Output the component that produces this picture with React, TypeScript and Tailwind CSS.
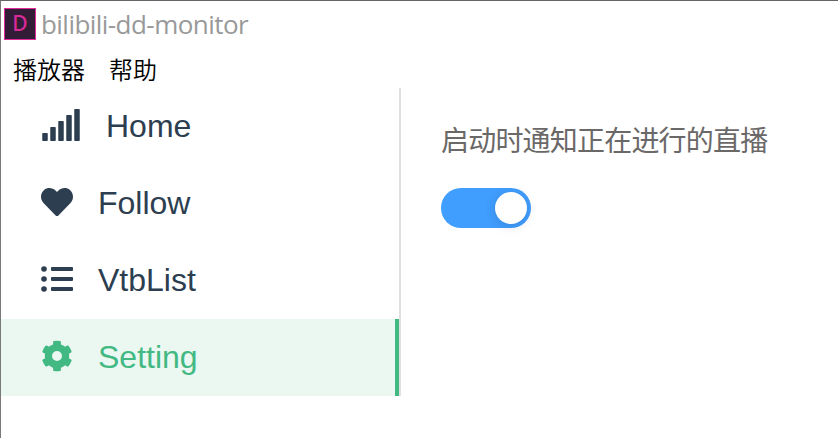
import type { ReactNode } from "react";
import { FaHeart } from "react-icons/fa";

function SignalIcon() {
  return (
    <svg width="40" height="32" viewBox="0 0 40 32" fill="currentColor">
      <rect x="1.25" y="24" width="5.5" height="8" rx="0.8" />
      <rect x="9.25" y="18" width="5.5" height="14" rx="0.8" />
      <rect x="17.25" y="12" width="5.5" height="20" rx="0.8" />
      <rect x="25.25" y="6" width="5.5" height="26" rx="0.8" />
      <rect x="33.25" y="0" width="5.5" height="32" rx="0.8" />
    </svg>
  );
}

function ListIcon() {
  return (
    <svg width="32" height="32" viewBox="0 0 32 32" fill="currentColor">
      <circle cx="3" cy="6" r="2.8" />
      <circle cx="3" cy="16" r="2.8" />
      <circle cx="3" cy="26" r="2.8" />
      <rect x="10" y="4" width="22" height="4" rx="1" />
      <rect x="10" y="14" width="22" height="4" rx="1" />
      <rect x="10" y="24" width="22" height="4" rx="1" />
    </svg>
  );
}

const TEETH = [0, 60, 120, 180, 240, 300];

function GearIcon() {
  return (
    <svg width="32" height="32" viewBox="0 0 32 32" fill="currentColor">
      <circle cx="16" cy="16" r="8.6" fill="none" stroke="currentColor" strokeWidth="7.2" />
      {TEETH.map((angle) => (
        <path
          key={angle}
          transform={`rotate(${angle} 16 16)`}
          d="M12.1 6V2q0-.8.8-1a16 16 0 0 1 6.2 0q.8.2.8 1v4z"
        />
      ))}
    </svg>
  );
}

function NavItem({ icon, label, active = false }: { icon: ReactNode; label: string; active?: boolean }) {
  return (
    <a
      className={
        "flex h-[77px] items-center gap-[25px] pl-10 text-[32px] leading-[77px] " +
        (active ? "border-r-4 border-[#42b983] bg-[#ebf7f1] text-[#42b983]" : "text-[#2c3e50]")
      }
    >
      <span className="shrink-0 pb-[3px]">{icon}</span>
      <span>{label}</span>
    </a>
  );
}

export default function App() {
  return (
    <div className="flex h-[438px] w-[838px] flex-col overflow-hidden border-t border-l border-t-[#686464] border-l-[#7b7977] bg-white font-['Liberation_Sans','Noto_Sans_CJK_SC',sans-serif]">
      <header className="flex h-[46px] shrink-0 items-center pl-[3px]">
        <div className="flex size-8 items-center justify-center border border-[#e02a9a] bg-[#331c35] pb-px font-['Noto_Sans',sans-serif] text-[21px] leading-none font-medium text-[#d82a98]">
          D
        </div>
        <span className="ml-[5px] font-['Open_Sans',sans-serif] text-[26px] leading-[46px] tracking-[-0.55px] text-[#999]">
          bilibili-dd-monitor
        </span>
      </header>
      <nav className="flex h-[41px] shrink-0 gap-6 pl-3 font-['Noto_Sans_CJK_SC',sans-serif] text-[24px] leading-[44px] font-[350] text-black">
        <span>播放器</span>
        <span>帮助</span>
      </nav>
      <main className="flex">
        <aside className="h-[308px] w-[400px] border-r-2 border-[#e0e0e0]">
          <NavItem icon={<SignalIcon />} label="Home" />
          <NavItem icon={<FaHeart size={32} />} label="Follow" />
          <NavItem icon={<ListIcon />} label="VtbList" />
          <NavItem icon={<GearIcon />} label="Setting" active />
        </aside>
        <section className="pt-[30px] pl-10">
          <p className="font-['Noto_Sans_CJK_SC',sans-serif] text-[28px] leading-[42px] font-normal tracking-[-0.8px] text-[#6b6868]">
            启动时通知正在进行的直播
          </p>
          <div className="mt-7 flex h-10 w-[90px] items-center justify-end rounded-full bg-[#409eff] pr-1">
            <div className="size-8 rounded-full bg-white shadow-[0_2px_12px_rgba(0,0,0,0.15)]" />
          </div>
        </section>
      </main>
    </div>
  );
}
